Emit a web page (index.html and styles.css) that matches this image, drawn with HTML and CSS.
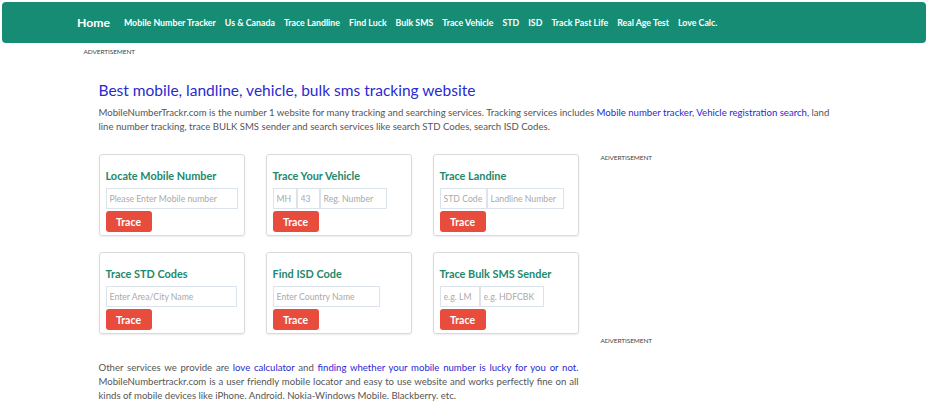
FILE: index.html
```html
<!DOCTYPE html>
<html lang="en">
<head>
    <meta charset="UTF-8">
    <meta name="viewport" content="width=device-width, initial-scale=1.0">
    <title>Mobile Number Trackr</title>
    <link rel="stylesheet" href="styles.css">
</head>
<body>

<!-- Top navigation -->
<nav class="navbar">
    <a class="brand" href="#">Home</a>
    <a href="#">Mobile Number Tracker</a>
    <a href="#">Us &amp; Canada</a>
    <a href="#">Trace Landline</a>
    <a href="#">Find Luck</a>
    <a href="#">Bulk SMS</a>
    <a href="#">Trace Vehicle</a>
    <a href="#">STD</a>
    <a href="#">ISD</a>
    <a href="#">Track Past Life</a>
    <a href="#">Real Age Test</a>
    <a href="#">Love Calc.</a>
</nav>

<div class="container">
    <div class="ad-label top-ad">ADVERTISEMENT</div>

    <div class="content">
        <h1>Best mobile, landline, vehicle, bulk sms tracking website</h1>
        <p class="intro">MobileNumberTrackr.com is the number 1 website for many tracking and searching services. Tracking services includes <a href="#">Mobile number tracker</a>, <a href="#">Vehicle registration search</a>, land line number tracking, trace BULK SMS sender and search services like search STD Codes, search ISD Codes.</p>

        <div class="main-row">
            <div class="left-col">
                <div class="cards">
                    <!-- Mobile -->
                    <form class="card">
                        <h3>Locate Mobile Number</h3>
                        <div class="inputs">
                            <input type="text" class="w-132" placeholder="Please Enter Mobile number">
                        </div>
                        <button type="submit">Trace</button>
                    </form>

                    <!-- Vehicle -->
                    <form class="card">
                        <h3>Trace Your Vehicle</h3>
                        <div class="inputs">
                            <input type="text" class="w-24" placeholder="MH">
                            <input type="text" class="w-23" placeholder="43">
                            <input type="text" class="w-67" placeholder="Reg. Number">
                        </div>
                        <button type="submit">Trace</button>
                    </form>

                    <!-- Landline -->
                    <form class="card">
                        <h3>Trace Landine</h3>
                        <div class="inputs">
                            <input type="text" class="w-47" placeholder="STD Code">
                            <input type="text" class="w-77" placeholder="Landline Number">
                        </div>
                        <button type="submit">Trace</button>
                    </form>

                    <!-- STD -->
                    <form class="card">
                        <h3>Trace STD Codes</h3>
                        <div class="inputs">
                            <input type="text" class="w-131" placeholder="Enter Area/City Name">
                        </div>
                        <button type="submit">Trace</button>
                    </form>

                    <!-- ISD -->
                    <form class="card">
                        <h3>Find ISD Code</h3>
                        <div class="inputs">
                            <input type="text" class="w-107" placeholder="Enter Country Name">
                        </div>
                        <button type="submit">Trace</button>
                    </form>

                    <!-- Bulk SMS -->
                    <form class="card">
                        <h3>Trace Bulk SMS Sender</h3>
                        <div class="inputs">
                            <input type="text" class="w-40" placeholder="e.g. LM">
                            <input type="text" class="w-64" placeholder="e.g. HDFCBK">
                        </div>
                        <button type="submit">Trace</button>
                    </form>
                </div>

                <p class="outro">Other services we provide are <a href="#">love calculator</a> and <a href="#">finding whether your mobile number is lucky for you or not.</a> MobileNumbertrackr.com is a user friendly mobile locator and easy to use website and works perfectly fine on all kinds of mobile devices like iPhone. Android. Nokia-Windows Mobile. Blackberry. etc.</p>
            </div>

            <div class="right-col">
                <div class="ad-label">ADVERTISEMENT</div>
                <div class="ad-slot"></div>
                <div class="ad-label">ADVERTISEMENT</div>
            </div>
        </div>
    </div>
</div>

</body>
</html>
```

FILE: styles.css
```css
body {
    font-family: Lato, "Liberation Sans", sans-serif;
    margin: 0;
    padding: 2px;
    background-color: #fff;
    color: #555;
}

a {
    text-decoration: none;
}

/* navigation */
.navbar {
    display: flex;
    align-items: center;
    gap: 9px;
    height: 41px;
    padding-left: 75px;
    background-color: #168c74;
    border-radius: 4px;
}

.navbar a {
    color: #fff;
    font-size: 8.8px;
    font-weight: bold;
}

.navbar .brand {
    font-size: 12.2px;
    margin-right: 5px;
}

.container {
    width: 761px;
    margin: 0 auto;
}

.ad-label {
    font-size: 6.5px;
    color: #444;
    letter-spacing: -0.1px;
}

.top-ad {
    margin-top: 5px;
}

.content {
    padding: 0 15px;
}

h1 {
    font-size: 15.5px;
    font-weight: normal;
    color: #2a2ad0;
    margin: 24px 0 5px;
    line-height: 22px;
}

p {
    font-size: 9.6px;
    line-height: 14px;
    margin: 0;
}

p a {
    color: #2a2ad0;
}

.main-row {
    display: flex;
    gap: 22px;
    margin-top: 20px;
}

.left-col {
    width: 480px;
}

.cards {
    display: grid;
    grid-template-columns: repeat(3, 146px);
    column-gap: 21px;
    row-gap: 16px;
}

.card {
    border: 1px solid #d8dbde;
    border-radius: 3px;
    padding: 13px 6px 3px;
    box-shadow: 0 1px 2px rgba(0, 0, 0, 0.08);
}

.card h3 {
    font-size: 10.9px;
    color: #23896c;
    margin: 0 0 4px;
    line-height: 16px;
}

.inputs {
    display: flex;
    height: 21px;
}

.inputs input {
    box-sizing: border-box;
    height: 21px;
    border: 1px solid #dde3ea;
    padding: 0 3px;
    font-family: Lato, "Liberation Sans", sans-serif;
    font-size: 8.7px;
    outline: none;
}

.inputs input::placeholder {
    color: #aaa;
}

.w-24 { width: 24px; }
.w-23 { width: 23px; }
.w-67 { width: 67px; }
.w-47 { width: 47px; }
.w-77 { width: 77px; }
.w-40 { width: 40px; }
.w-64 { width: 64px; }
.w-107 { width: 107px; }
.w-131 { width: 131px; }
.w-132 { width: 132px; }

button {
    display: block;
    margin-top: 2px;
    width: 46px;
    height: 21px;
    background-color: #e74c3c;
    color: #fff;
    font-family: Lato, "Liberation Sans", sans-serif;
    font-size: 10.5px;
    font-weight: bold;
    border: none;
    border-radius: 3px;
    padding: 0;
}

.outro {
    margin-top: 27px;
    text-align: justify;
}

.ad-slot {
    height: 176px;
}
```
